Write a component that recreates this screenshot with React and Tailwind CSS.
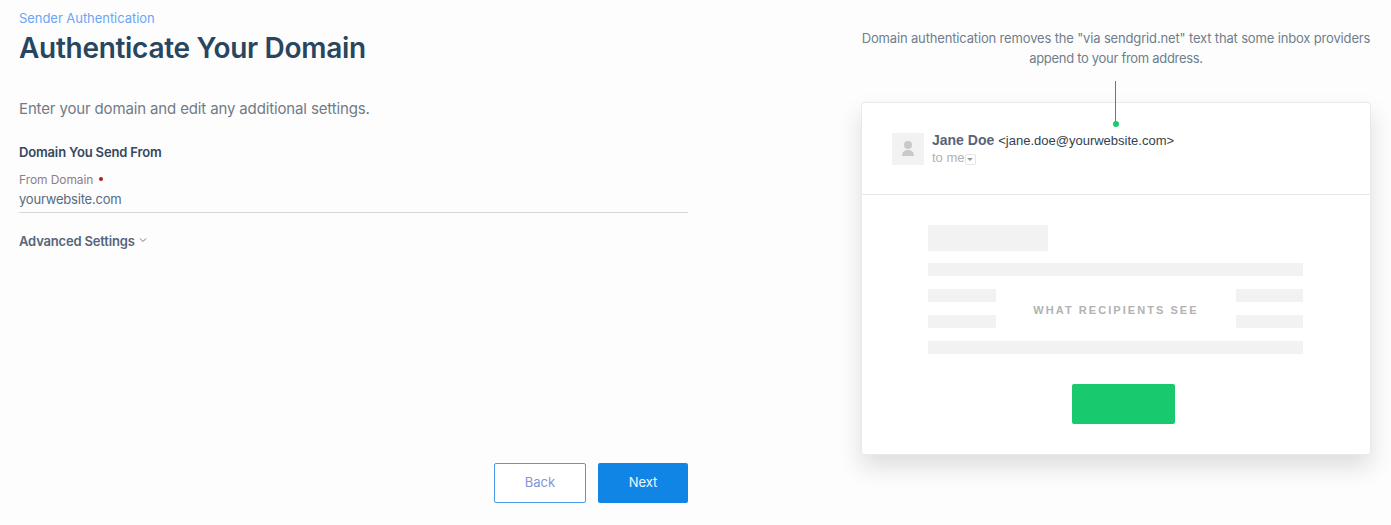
import React from "react";

function Bar({ className = "" }) {
  return <div className={"h-[13px] bg-[#f2f2f2] " + className} />;
}

export default function App() {
  return (
    <div className="w-[1391px] h-[525px] overflow-hidden bg-[#fdfdfd] flex font-['Inter',sans-serif]">
      <main className="w-[669px] ml-[19px] h-full flex flex-col">
        <div className="pt-[10px] text-[13px] leading-[16px] tracking-[-0.05px] text-[#6aa5f5]">Sender Authentication</div>
        <h1 className="mt-[3px] text-[28px] leading-[38px] font-semibold tracking-[-0.3px] text-[#294661]">Authenticate Your Domain</h1>
        <p className="mt-[32px] text-[15px] leading-[20px] tracking-[-0.14px] text-[#707b87]">Enter your domain and edit any additional settings.</p>
        <h2 className="mt-[23px] text-[13px] leading-[20px] font-semibold tracking-[-0.15px] text-[#34495e]">Domain You Send From</h2>
        <div className="mt-[10px] border-b border-[#d8d8d8] pb-[4px]">
          <div className="flex items-center text-[12px] leading-[16px] tracking-[-0.08px] text-[#8d7f88]">
            From Domain
            <span className="ml-[6px] mb-[2px] w-[4px] h-[4px] rounded-full bg-[#b71c1c]" />
          </div>
          <div className="mt-[3px] text-[13px] leading-[17px] tracking-[-0.2px] text-[#546b81]">yourwebsite.com</div>
        </div>
        <div className="mt-[19px] flex items-center text-[13px] leading-[18px] font-semibold tracking-[-0.17px] text-[#566579]">
          Advanced Settings
          <svg className="ml-[4px] mb-[2px]" width="8" height="6" viewBox="0 0 8 6" fill="none" stroke="#6b7c8f" strokeWidth="1">
            <path d="M1 1.5L4 4.5L7 1.5" />
          </svg>
        </div>
        <div className="mt-auto mb-[22px] flex justify-end gap-[12px]">
          <button className="w-[92px] h-[40px] rounded-[2px] border border-[#4a9be8] bg-white text-[13px] text-[#7f97d8]">Back</button>
          <button className="w-[90px] h-[40px] rounded-[2px] bg-[#1185e6] text-[13px] text-[#f2f8ff]">Next</button>
        </div>
      </main>

      <aside className="ml-[173px] w-[510px] relative">
        <p className="pt-[28px] text-center text-[13px] leading-[20px] tracking-[-0.157px] text-[#6f7d8c] whitespace-nowrap">
          Domain authentication removes the "via sendgrid.net" text that some inbox providers
          <br />
          <span className="tracking-[-0.3px]">append to your from address.</span>
        </p>
        <div className="absolute left-[254px] top-[81px] w-px h-[41px] bg-[#18a85c]" />
        <div className="absolute left-[252px] top-[121px] w-[6px] h-[6px] rounded-full bg-[#18c96e]" />

        <div className="mt-[34px] h-[353px] bg-white border border-[#e8e9ec] rounded-[3px] shadow-[0_12px_24px_rgba(0,0,0,0.13)] flex flex-col">
          <div className="h-[92px] shrink-0 border-b border-[#e6e7ea] pl-[30px] pt-[30px] flex">
            <div className="w-[32px] h-[32px] bg-[#f2f2f2] flex items-center justify-center">
              <svg width="16" height="18" viewBox="0 0 16 18" fill="#c9c9c9">
                <circle cx="8" cy="5" r="4" />
                <path d="M2 16c0-4 2.5-6 6-6s6 2 6 6z" />
              </svg>
            </div>
            <div className="ml-[8px] font-['Liberation_Sans',sans-serif]">
              <div className="-mt-[2px] text-[13px] leading-[18px] text-[#333f4f] whitespace-nowrap">
                <span className="text-[14px] font-bold text-[#566579]">Jane Doe</span>
                <span className="ml-[4px]">&lt;jane.doe@yourwebsite.com&gt;</span>
              </div>
              <div className="flex items-center text-[13px] leading-[15px] text-[#b2b2b2]">
                to me
                <span className="w-[11px] h-[11px] mt-[3px] border border-[#e6e6e6] rounded-[2px] flex items-center justify-center">
                  <span className="w-0 h-0 border-l-[3px] border-r-[3px] border-t-[3px] border-l-transparent border-r-transparent border-t-[#999999]" />
                </span>
              </div>
            </div>
          </div>

          <div className="pl-[66px] pr-[67px] pt-[30px] flex flex-col">
            <div className="w-[120px] h-[26px] bg-[#f2f2f2]" />
            <Bar className="mt-[12px]" />
            <div className="mt-[13px] grid grid-cols-[68px_1fr_67px] gap-y-[13px]">
              <Bar />
              <div className="row-span-2 pt-[3px] flex items-center justify-center font-['Liberation_Sans',sans-serif] text-[11px] font-bold tracking-[2.05px] text-[#b2b2b2] whitespace-nowrap">
                WHAT RECIPIENTS SEE
              </div>
              <Bar />
              <Bar />
              <Bar />
            </div>
            <Bar className="mt-[13px]" />
            <div className="mt-[30px] ml-[144px] w-[103px] h-[40px] rounded-[2px] bg-[#18c96e]" />
          </div>
        </div>
      </aside>
    </div>
  );
}
